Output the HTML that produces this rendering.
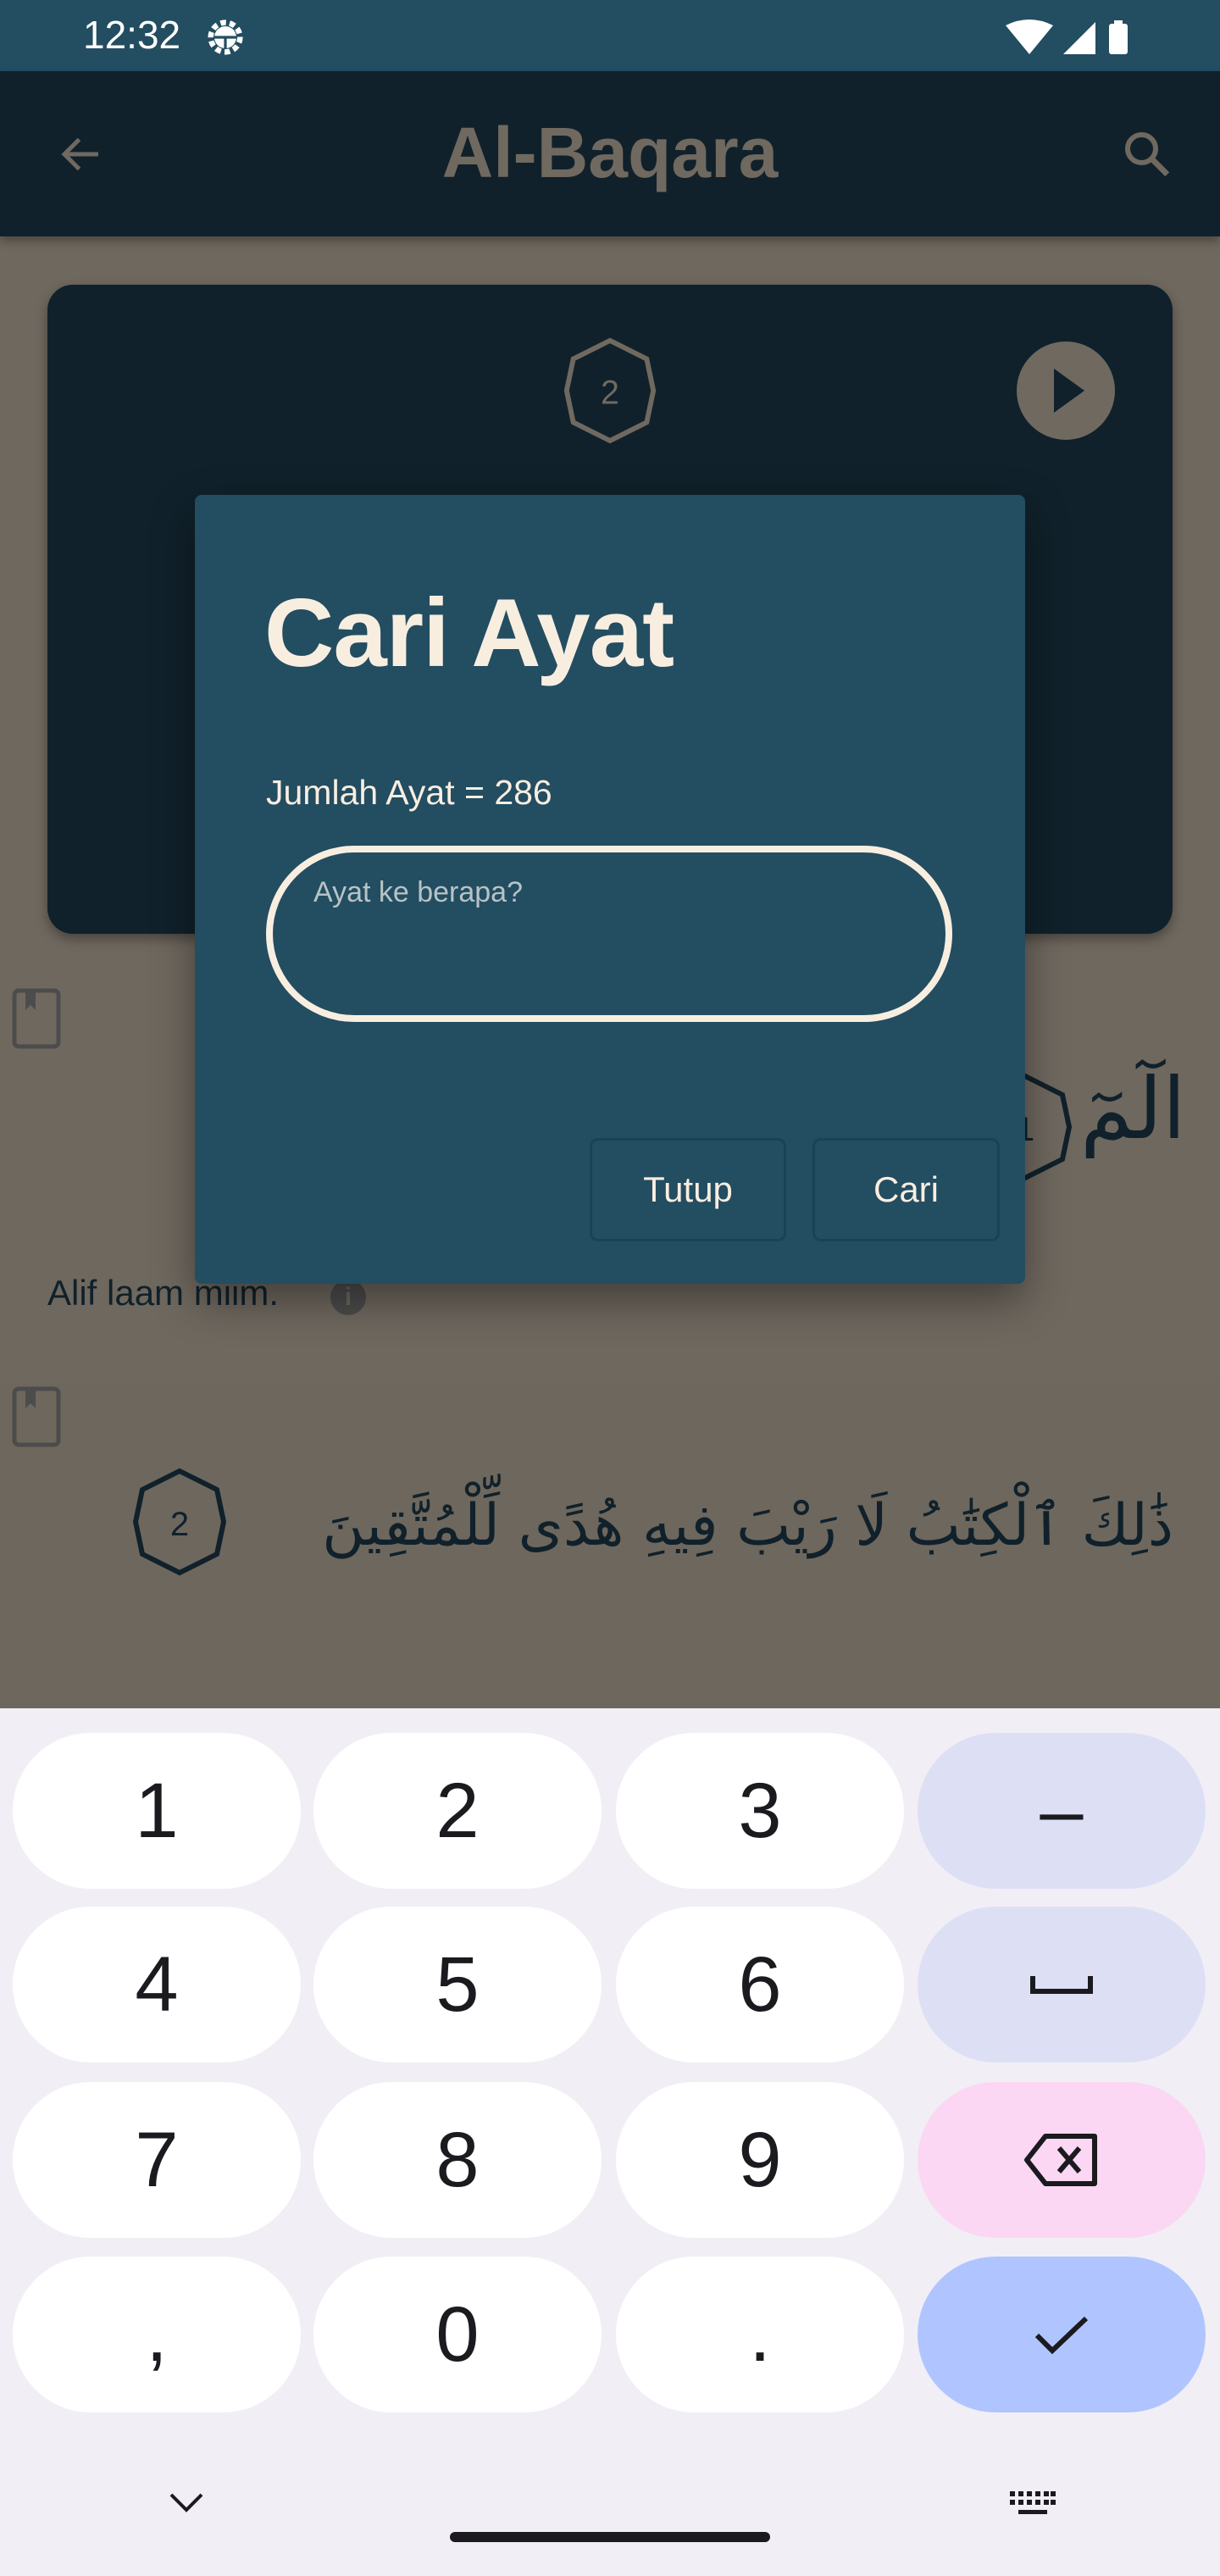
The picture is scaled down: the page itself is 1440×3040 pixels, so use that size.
<!DOCTYPE html>
<html><head><meta charset="utf-8"><style>
*{margin:0;padding:0;box-sizing:border-box}
body{width:1440px;height:3040px;position:relative;overflow:hidden;background:#6f685f;font-family:"Liberation Sans",sans-serif}
.a{position:absolute}
.key{position:absolute;width:340px;height:184px;border-radius:92px;background:#fff;display:flex;align-items:center;justify-content:center;font-size:92px;color:#1b1b1f}
</style></head><body>
<div class="a" style="left:0;top:0;width:1440px;height:84px;background:#234d61"></div>
<div class="a" style="left:98px;top:14px;font-size:46px;color:#fff">12:32</div>
<svg class="a" style="left:240px;top:18px" width="52" height="52" viewBox="0 0 24 24"><circle cx="12" cy="12" r="8" fill="none" stroke="#fff" stroke-width="3" stroke-dasharray="3 2"/><circle cx="12" cy="12" r="6" fill="#fff"/><path d="M6 12h12M12 12v6" stroke="#234d61" stroke-width="1.5"/></svg>
<svg class="a" style="left:1185px;top:22px" width="160" height="44" viewBox="0 0 160 44"><path d="M2 8Q30 -6 58 8L30 42Z" fill="#fff"/><path d="M70 42L108 4V42Z" fill="#fff"/><rect x="124" y="6" width="22" height="36" rx="3" fill="#fff"/><rect x="130" y="2" width="10" height="6" fill="#fff"/></svg>
<div class="a" style="left:0;top:84px;width:1440px;height:195px;background:#10212b;box-shadow:0 6px 10px rgba(0,0,0,.3)"></div>
<svg class="a" style="left:66px;top:152px" width="60" height="60" viewBox="0 0 24 24"><path d="M20 12H5M11 5l-7 7 7 7" stroke="#706960" stroke-width="2" fill="none"/></svg>
<div class="a" style="left:0;top:132px;width:1440px;text-align:center;font-size:84px;font-weight:bold;color:#706960">Al-Baqara</div>
<svg class="a" style="left:1320px;top:148px" width="66" height="66" viewBox="0 0 24 24"><circle cx="10" cy="10" r="6" stroke="#706960" stroke-width="2.2" fill="none"/><path d="M14.5 14.5L21 21" stroke="#706960" stroke-width="2.5"/></svg>
<div class="a" style="left:56px;top:336px;width:1328px;height:766px;background:#10212b;border-radius:30px;box-shadow:0 6px 14px rgba(0,0,0,.35)"></div>
<svg class="a" style="left:660px;top:396px" width="120" height="130" viewBox="0 0 60 66"><path d="M30 3 L52 14 L56 33 L52 52 L30 63 L8 52 L4 33 L8 14Z" fill="none" stroke="#706960" stroke-width="3"/><text x="30" y="41" text-anchor="middle" font-size="20" fill="#706960" font-family="Liberation Sans">2</text></svg>
<div class="a" style="left:1200px;top:403px;width:116px;height:116px;border-radius:50%;background:#706960"></div>
<svg class="a" style="left:1240px;top:433px" width="44" height="56"><path d="M4 2L40 28L4 54Z" fill="#10212b"/></svg>
<svg class="a" style="left:14px;top:1166px" width="58" height="72" viewBox="0 0 58 72"><rect x="3" y="3" width="52" height="66" rx="5" fill="none" stroke="#4c4c4c" stroke-width="5"/><path d="M16 5V26L22 20L28 26V5" fill="#4c4c4c"/></svg>
<svg class="a" style="left:1150px;top:1262px" width="120" height="136" viewBox="0 0 60 66"><path d="M30 3 L52 14 L56 33 L52 52 L30 63 L8 52 L4 33 L8 14Z" fill="none" stroke="#10212b" stroke-width="3"/><text x="30" y="41" text-anchor="middle" font-size="20" fill="#10212b" font-family="Liberation Sans">1</text></svg>
<div class="a" style="left:1275px;top:1250px;font-size:100px;color:#10212b;font-family:'DejaVu Sans',sans-serif">الٓمٓ</div>
<div class="a" style="left:56px;top:1502px;font-size:42px;color:#10212b">Alif laam miim.</div>
<div class="a" style="left:390px;top:1510px;width:42px;height:42px;border-radius:50%;background:#4c4c4c;color:#6f685f;font-size:30px;text-align:center;line-height:42px;font-weight:bold">i</div>
<div class="a" style="left:0;top:1632px;width:1440px;height:384px;background:#6e675d"></div>
<svg class="a" style="left:14px;top:1636px" width="58" height="72" viewBox="0 0 58 72"><rect x="3" y="3" width="52" height="66" rx="5" fill="none" stroke="#4c4c4c" stroke-width="5"/><path d="M16 5V26L22 20L28 26V5" fill="#4c4c4c"/></svg>
<svg class="a" style="left:152px;top:1728px" width="120" height="136" viewBox="0 0 60 66"><path d="M30 3 L52 14 L56 33 L52 52 L30 63 L8 52 L4 33 L8 14Z" fill="none" stroke="#10212b" stroke-width="3"/><text x="30" y="41" text-anchor="middle" font-size="20" fill="#10212b" font-family="Liberation Sans">2</text></svg>
<div class="a" style="left:290px;top:1760px;width:1095px;text-align:right;font-size:68px;color:#10212b;font-family:'DejaVu Sans',sans-serif;direction:rtl;white-space:nowrap">ذَٰلِكَ ٱلْكِتَٰبُ لَا رَيْبَ فِيهِ هُدًى لِّلْمُتَّقِينَ</div>
<div class="a" style="left:230px;top:584px;width:980px;height:931px;background:#234d61;border-radius:8px;box-shadow:0 20px 50px rgba(0,0,0,.4)"></div>
<div class="a" style="left:312px;top:682px;font-size:114px;font-weight:bold;color:#f8eee0;letter-spacing:-1px">Cari Ayat</div>
<div class="a" style="left:314px;top:912px;font-size:41px;color:#f8eee0">Jumlah Ayat = 286</div>
<div class="a" style="left:314px;top:998px;width:810px;height:208px;border:8px solid #f8eee0;border-radius:104px"></div>
<div class="a" style="left:370px;top:1034px;font-size:34px;color:#b7c3c6">Ayat ke berapa?</div>
<div class="a" style="left:696px;top:1343px;width:232px;height:122px;border:3px solid #1b4253;border-radius:10px;color:#f8eee0;font-size:42px;text-align:center;line-height:116px">Tutup</div>
<div class="a" style="left:959px;top:1343px;width:221px;height:122px;border:3px solid #1b4253;border-radius:10px;color:#f8eee0;font-size:42px;text-align:center;line-height:116px">Cari</div>
<div class="a" style="left:0;top:2016px;width:1440px;height:1024px;background:#f1eff5"></div>
<div class="key" style="left:15px;top:2045px">1</div>
<div class="key" style="left:370px;top:2045px">2</div>
<div class="key" style="left:727px;top:2045px">3</div>
<div class="key" style="left:1083px;top:2045px;background:#dde0f5">–</div>
<div class="key" style="left:15px;top:2250px">4</div>
<div class="key" style="left:370px;top:2250px">5</div>
<div class="key" style="left:727px;top:2250px">6</div>
<div class="key" style="left:1083px;top:2250px;background:#dde0f5"><svg width="80" height="40"><path d="M6 10V28H74V10" stroke="#1b1b1f" stroke-width="6" fill="none"/></svg></div>
<div class="key" style="left:15px;top:2457px">7</div>
<div class="key" style="left:370px;top:2457px">8</div>
<div class="key" style="left:727px;top:2457px">9</div>
<div class="key" style="left:1083px;top:2457px;background:#fbd7f3"><svg width="90" height="64" viewBox="0 0 90 64"><path d="M26 4H84V60H26L4 32Z" stroke="#1b1b1f" stroke-width="6" fill="none" stroke-linejoin="round"/><path d="M42 18L66 46M66 18L42 46" stroke="#1b1b1f" stroke-width="6"/></svg></div>
<div class="key" style="left:15px;top:2663px">,</div>
<div class="key" style="left:370px;top:2663px">0</div>
<div class="key" style="left:727px;top:2663px">.</div>
<div class="key" style="left:1083px;top:2663px;background:#b0c5ff"><svg width="70" height="50"><path d="M6 26L24 44L64 6" stroke="#1b1b1f" stroke-width="6" fill="none"/></svg></div>
<svg class="a" style="left:198px;top:2940px" width="44" height="28"><path d="M4 4L22 22L40 4" stroke="#1b1b1f" stroke-width="4" fill="none"/></svg>
<svg class="a" style="left:1190px;top:2938px" width="58" height="34"><g fill="#1b1b1f"><rect x="2" y="2" width="6" height="6"/><rect x="12" y="2" width="6" height="6"/><rect x="22" y="2" width="6" height="6"/><rect x="32" y="2" width="6" height="6"/><rect x="42" y="2" width="6" height="6"/><rect x="50" y="2" width="6" height="6"/><rect x="2" y="12" width="6" height="6"/><rect x="12" y="12" width="6" height="6"/><rect x="22" y="12" width="6" height="6"/><rect x="32" y="12" width="6" height="6"/><rect x="42" y="12" width="6" height="6"/><rect x="50" y="12" width="6" height="6"/><rect x="12" y="24" width="34" height="5"/></g></svg>
<div class="a" style="left:531px;top:2988px;width:378px;height:12px;border-radius:6px;background:#1b1b1f"></div>
</body></html>
